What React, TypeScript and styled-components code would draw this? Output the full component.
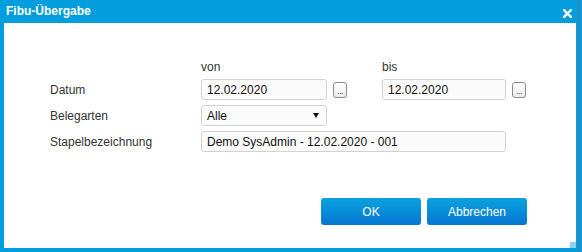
import React from "react";
import styled, { createGlobalStyle } from "styled-components";

const Global = createGlobalStyle`
  html, body { margin: 0; padding: 0; overflow: hidden; background: #ffffff; }
  * { box-sizing: border-box; }
`;

const Window = styled.div`
  width: 582px;
  height: 252px;
  display: flex;
  flex-direction: column;
  background: linear-gradient(
    to right,
    #019ddc 578px,
    #5e7486 578px,
    #5e7486 579px,
    #019ddc 579px
  );
  font-family: "Liberation Sans", Arial, sans-serif;
  font-size: 12px;
`;

const TitleBar = styled.div`
  height: 23px;
  flex: none;
  display: flex;
  align-items: center;
  justify-content: space-between;
  padding: 0 10px 0 6px;
`;

const Title = styled.span`
  color: #ffffff;
  font-weight: bold;
  font-size: 12px;
  line-height: 23px;
`;

const CloseButton = styled.button`
  width: 9px;
  height: 9px;
  padding: 0;
  margin-top: 3px;
  border: none;
  background: none;
  display: flex;
  cursor: pointer;
`;

const Body = styled.div`
  flex: 1;
  position: relative;
  margin: 0 6px 4px 4px;
  background: #ffffff;
  display: flex;
  flex-direction: column;
`;

const Form = styled.div`
  display: grid;
  grid-template-columns: 151px 126px 20px 35px 124px 20px;
  grid-template-rows: 15px 21px 21px 21px;
  row-gap: 5px;
  padding: 36px 0 0 46px;
`;

const Label = styled.div<{ $col?: number }>`
  grid-column: ${(p) => p.$col ?? 1};
  align-self: center;
  color: #333333;
  white-space: nowrap;
`;

const Field = styled.div<{ $col: number; $span?: number }>`
  grid-column: ${(p) => p.$col} / span ${(p) => p.$span ?? 1};
  height: 100%;
  border: 1px solid #d2d2d2;
  border-radius: 3px;
  background: #fbfbfb;
  padding: 0 7px 0 5px;
  display: flex;
  align-items: center;
  justify-content: space-between;
  color: #111111;
  white-space: nowrap;
`;

const DotsButton = styled.button<{ $col: number }>`
  grid-column: ${(p) => p.$col};
  align-self: center;
  justify-self: start;
  margin-left: 6px;
  width: 14px;
  height: 16px;
  padding: 0 0 2px;
  border: 1px solid #8c8c8c;
  border-radius: 3px;
  background: linear-gradient(#ffffff, #ececec);
  display: flex;
  align-items: flex-end;
  justify-content: center;
  font-family: "Liberation Sans", Arial, sans-serif;
  font-size: 9px;
  line-height: 8px;
  color: #2b4a7a;
  letter-spacing: -0.5px;
`;

const Footer = styled.div`
  display: flex;
  justify-content: flex-end;
  gap: 6px;
  padding: 46px 49px 0 0;
`;

const PrimaryButton = styled.button`
  width: 100px;
  height: 27px;
  border: none;
  border-radius: 3px;
  background: linear-gradient(#0aa2de, #0676d1);
  color: #ffffff;
  font-family: "Liberation Sans", Arial, sans-serif;
  font-size: 12px;
  cursor: pointer;
`;

const ResizeGrip = styled.div`
  position: absolute;
  right: 0;
  bottom: 0;
  width: 6px;
  height: 6px;
  background: #8dd0f1;
`;

export default function App() {
  return (
    <>
      <Global />
      <Window>
        <TitleBar>
          <Title>Fibu-Übergabe</Title>
          <CloseButton aria-label="close">
            <svg width="9" height="9" viewBox="0 0 9 9">
              <path d="M1 1 L8 8 M8 1 L1 8" stroke="#ffffff" strokeWidth="2.4" strokeLinecap="square" />
            </svg>
          </CloseButton>
        </TitleBar>
        <Body>
          <Form>
            <Label $col={2}>von</Label>
            <Label $col={5}>bis</Label>

            <Label>Datum</Label>
            <Field $col={2}>12.02.2020</Field>
            <DotsButton $col={3}>...</DotsButton>
            <Field $col={5}>12.02.2020</Field>
            <DotsButton $col={6}>...</DotsButton>

            <Label>Belegarten</Label>
            <Field $col={2}>
              <span>Alle</span>
              <svg width="6" height="5" viewBox="0 0 6 5">
                <path d="M0 0 H6 L3 5 Z" fill="#111111" />
              </svg>
            </Field>

            <Label>Stapelbezeichnung</Label>
            <Field $col={2} $span={4}>Demo SysAdmin - 12.02.2020 - 001</Field>
          </Form>
          <Footer>
            <PrimaryButton>OK</PrimaryButton>
            <PrimaryButton>Abbrechen</PrimaryButton>
          </Footer>
          <ResizeGrip />
        </Body>
      </Window>
    </>
  );
}
